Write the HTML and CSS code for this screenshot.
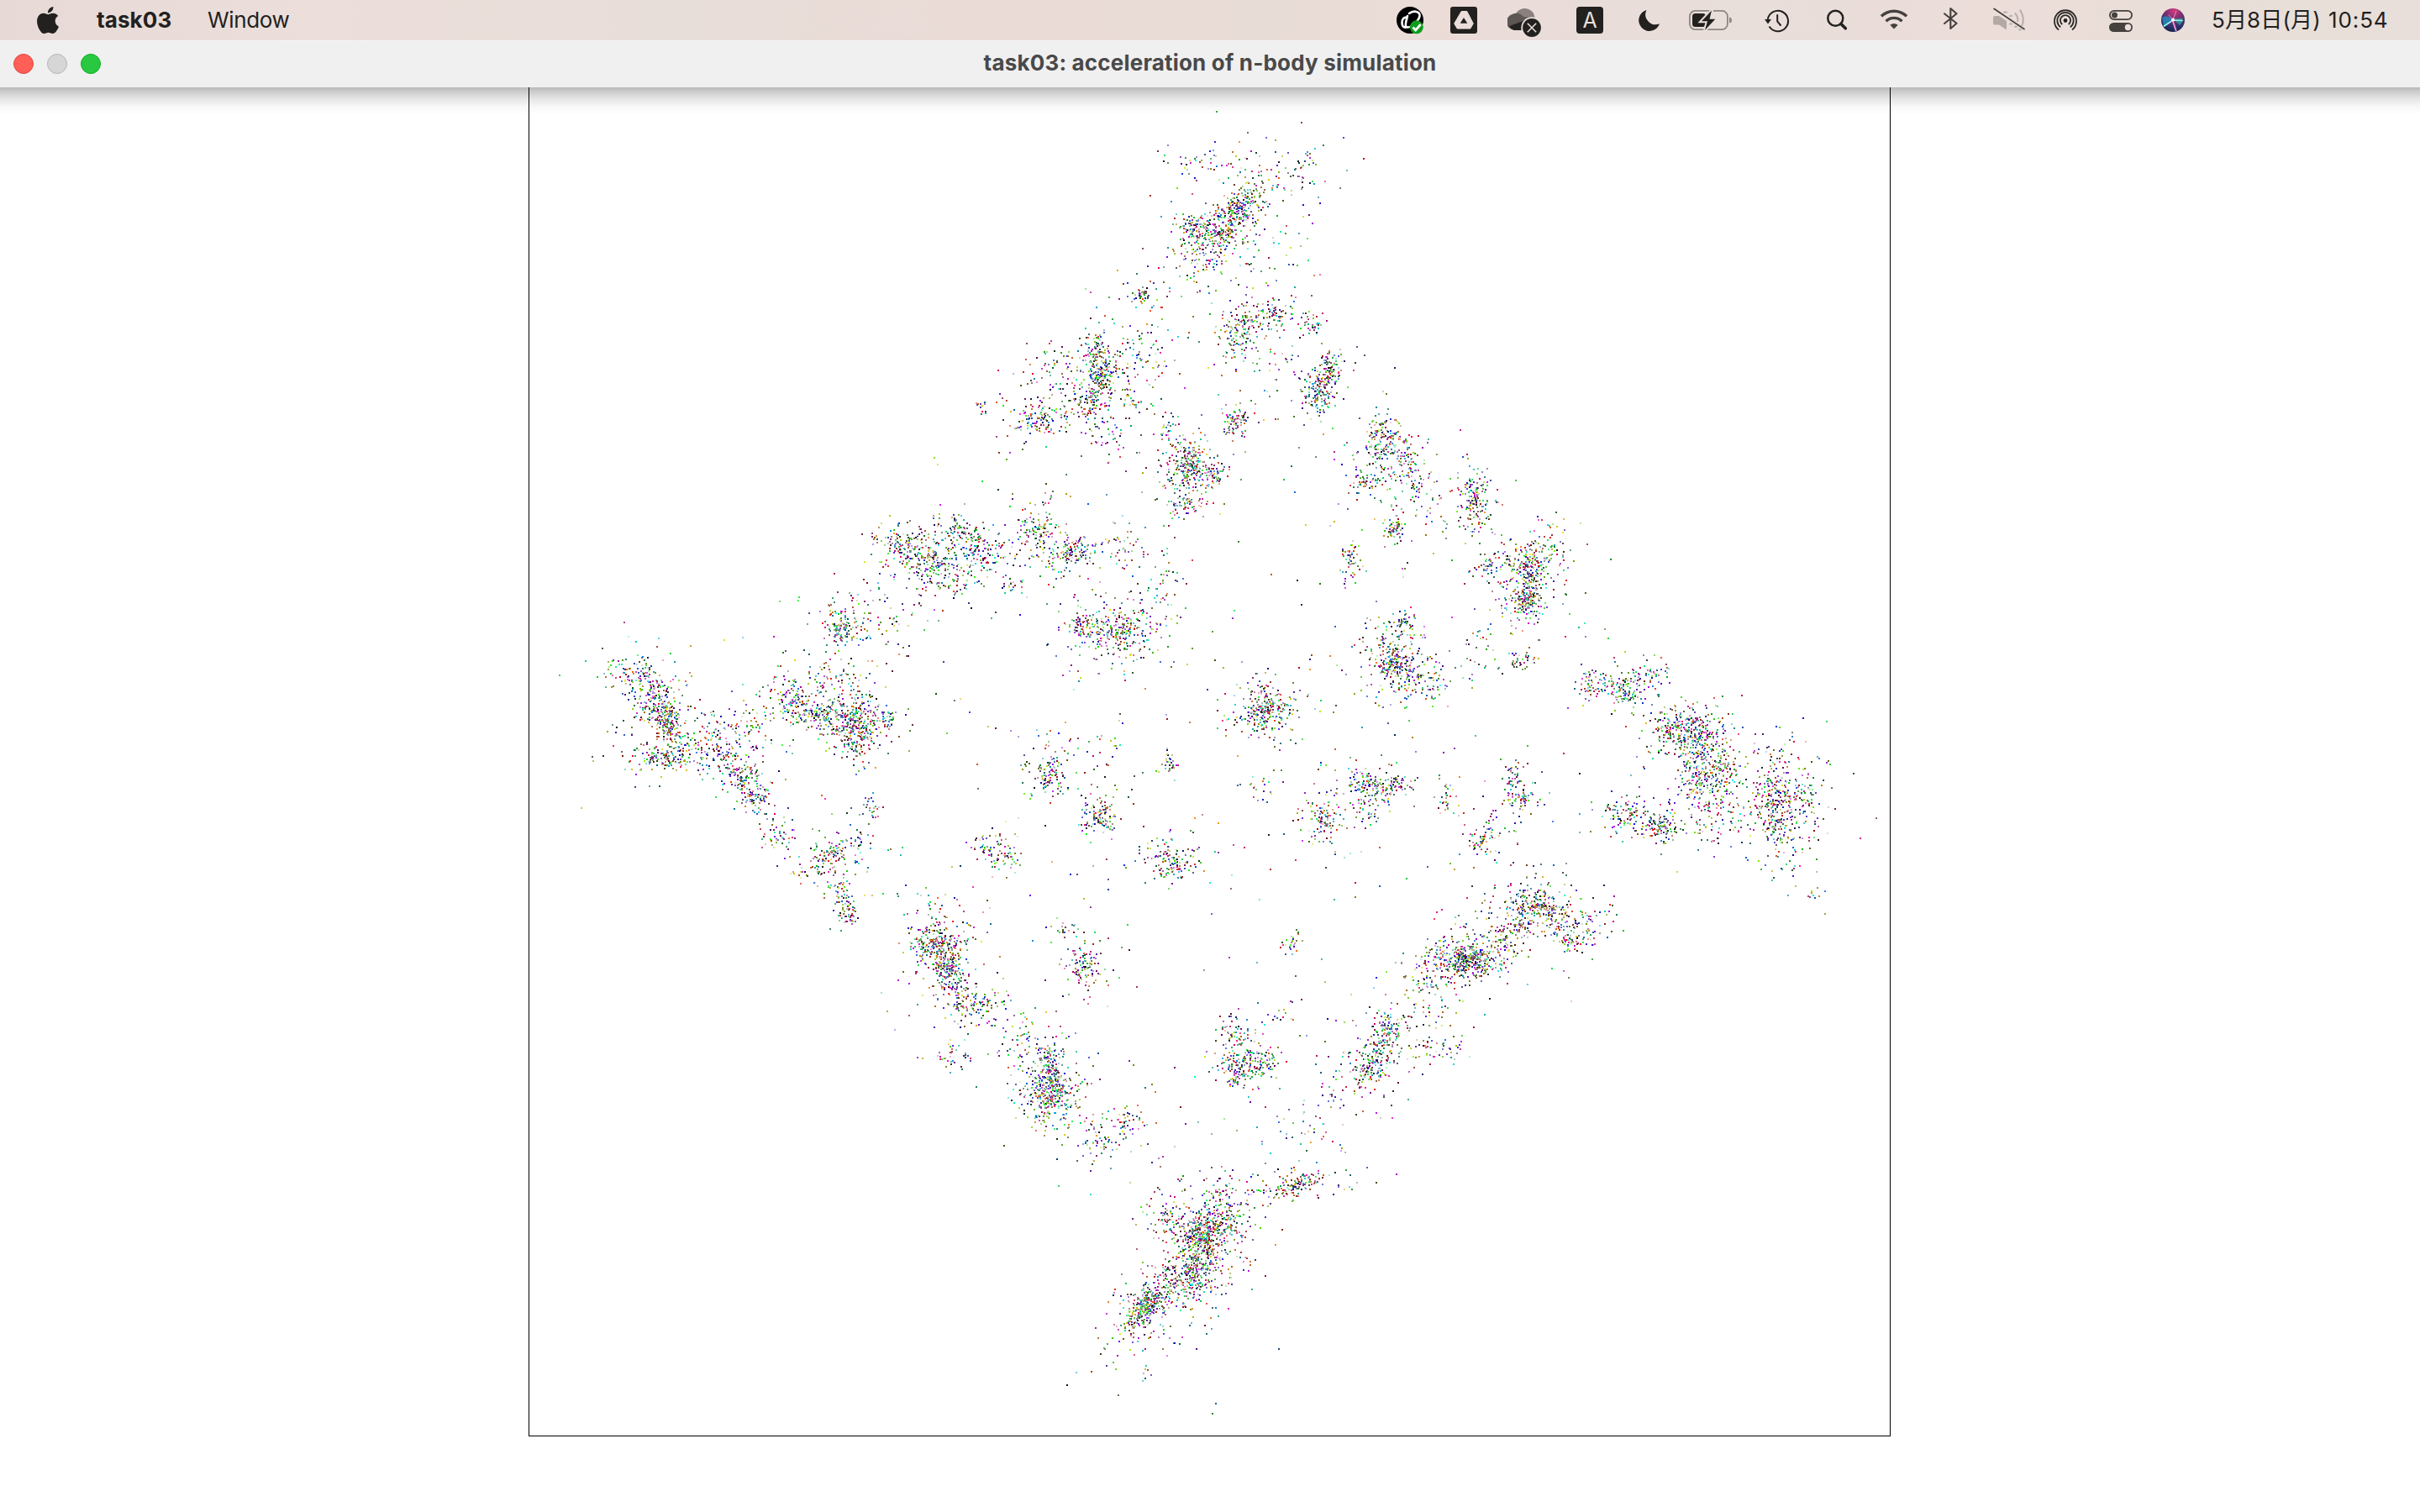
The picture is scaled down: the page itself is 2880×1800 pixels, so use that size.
FILE: index.html
```html
<!DOCTYPE html>
<html lang="ja">
<head>
<meta charset="utf-8">
<title>task03</title>
<link rel="stylesheet" href="styles.css">
</head>
<body>
<header class="menubar">
  <svg class="apple" width="26" height="32" viewBox="2.2 0 19.6 24" preserveAspectRatio="none"><path d="M12.152 6.896c-.948 0-2.415-1.078-3.96-1.04-2.04.027-3.91 1.183-4.961 3.014-2.117 3.675-.546 9.103 1.519 12.09 1.013 1.454 2.208 3.09 3.792 3.039 1.52-.065 2.09-.987 3.935-.987 1.831 0 2.35.987 3.96.948 1.637-.026 2.676-1.48 3.676-2.948 1.156-1.688 1.636-3.325 1.662-3.415-.039-.013-3.182-1.221-3.22-4.857-.026-3.04 2.48-4.494 2.597-4.559-1.429-2.09-3.623-2.324-4.39-2.376-2-.156-3.675 1.09-4.61 1.09zM15.53 3.83c.843-1.012 1.4-2.427 1.245-3.83-1.207.052-2.662.805-3.532 1.818-.78.896-1.454 2.338-1.273 3.714 1.338.104 2.715-.688 3.559-1.701"/></svg>
  <span class="app-name">task03</span>
  <span class="menu-item">Window</span>
  <div class="status">
    <svg width="64" height="48"><circle cx="16" cy="24" r="16" fill="#000"/><path d="M11.500 20.500C8 21 6.500 24 6.500 27C6.500 31 8 33 11.500 32.500M13 19C12 24 9.500 29 11.500 32C15 34 22 29 24.500 25M15 16C21 11.500 28 14 27.500 19C27 23 24 26 21 29" fill="none" stroke="#fff" stroke-width="2.600" stroke-linecap="round"/><circle cx="23.800" cy="32.300" r="8" fill="#0e9c1c"/><path d="M19.500 32.500l3.200 3.500l6-7" fill="none" stroke="#fff" stroke-width="2.800"/></svg>
    <svg width="68" height="48"><rect y="8" width="32" height="32" rx="3"/><path d="M13.200 13.500H19.800L27.300 28L23.800 34H8.200L4.700 28Z" fill="#ebdeda" stroke="#ebdeda" stroke-linejoin="round"/><path d="M16 21L20.300 27.700H11.700Z"/></svg>
    <svg width="82" height="48"><circle cx="20.500" cy="22" r="12" fill="#8a807d"/><path d="M8 36A9.800 9.800 0 0 1 5.500 17C10 14.500 16 15.500 19 20C24 20 30 22 33 26L22 36Z" fill="#5d5753"/><path d="M2 31L22 24L24 36H8Q4.500 35 2 31Z" fill="#252321"/><circle cx="29" cy="33" r="12.700" fill="#e9deda"/><circle cx="29" cy="33" r="10.900"/><path d="M23.800 27.800l10.400 10.400m0-10.400l-10.400 10.400" stroke="#e9deda" stroke-width="1.600"/></svg>
    <svg width="74" height="48"><rect y="8" width="32" height="32" rx="4"/><text x="16" y="33" class="input-letter">A</text></svg>
    <svg width="60" height="48"><path d="M9.500 12A12.700 12.700 0 1 0 25 28.200A12 12 0 0 1 9.500 12Z"/></svg>
    <svg width="90" height="48"><rect x=".9" y="12.900" width="45" height="22.200" rx="6.500" fill="none" stroke="#8e8683" stroke-width="1.800"/><path d="M48 20.500Q51 21 51 24T48 27.500Z" fill="#8e8683"/><rect x="4" y="16" width="16" height="16" rx="3.500"/><path d="M27 12.500L15 25.300H22L19 36L31.300 22.700H24.500Z" stroke="#e9deda" stroke-width="4"/><path d="M27 12.500L15 25.300H22L19 36L31.300 22.700H24.500Z"/></svg>
    <svg width="74" height="48"><path d="M3.800 23A12.200 12.200 0 1 1 5.500 31.500" fill="none" stroke="#222120" stroke-width="2"/><path d="M0 23H8L4 28.500Z"/><path d="M15.200 18V25.500L19 30" fill="none" stroke="#222120" stroke-width="2" stroke-linecap="round"/></svg>
    <svg width="63" height="48"><circle cx="10.300" cy="21.700" r="9" fill="none" stroke="#222120" stroke-width="2.500"/><path d="M17 28.500L22.300 33.800" stroke="#222120" stroke-width="3.600" stroke-linecap="round"/></svg>
    <svg width="76" height="48"><g fill="none" stroke="#45413f" stroke-width="3.400"><path d="M1.900 19.300A21.700 21.700 0 0 1 32.100 19.300"/><path d="M7.500 25.300A13.500 13.500 0 0 1 26.500 25.300"/></g><path d="M17 34.500L12.300 29.800Q17 26 21.700 29.800Z" fill="#45413f"/></svg>
    <svg width="58" height="48"><path d="M1 16.300L15.500 27.800L8.300 34V10L15.500 16.300L1 28" fill="none" stroke="#45413f" stroke-width="2.100" stroke-linejoin="round" stroke-linecap="round"/></svg>
    <svg width="72" height="48"><path d="M3 19H8L17 25V35H16L8 29.500H3Q1 29.500 1 27.500V21Q1 19 3 19Z" fill="#b3a9a5"/><g fill="none" stroke="#b9aeaa" stroke-width="2"><path d="M33 11.500Q39.500 23 35 31"/><path d="M27 15.500Q31.500 21 30 26"/><path d="M21 28.500h2M27 31.800h2M32 35.300h2M21 19h2M14 14.500h3" stroke-linecap="round"/></g><path d="M1.500 10L38.500 35" stroke="#45413f" stroke-width="1.600"/></svg>
    <svg width="67" height="48"><g fill="none" stroke="#2b2927" stroke-width="1.800"><path d="M7 35.500A13 13 0 1 1 23 35.500"/><path d="M9.200 32.300A9.700 9.700 0 1 1 20.800 32.300"/><path d="M11.300 29A6.100 6.100 0 1 1 18.700 29"/></g><circle cx="15" cy="24.500" r="2.400"/></svg>
    <svg width="62" height="48"><rect x=".9" y="12.900" width="26.200" height="10.200" rx="5.100" fill="none" stroke="#45413f" stroke-width="1.800"/><circle cx="6.500" cy="18" r="3.500" fill="#45413f"/><rect y="27" width="28" height="11" rx="5.500" fill="#45413f"/><circle cx="22.500" cy="32.500" r="3.700" fill="#ebdeda"/></svg>
    <svg width="60" height="48"><defs><radialGradient id="orb" cx=".55" cy=".1" r=".95"><stop offset="0" stop-color="#d23a7c"/><stop offset=".42" stop-color="#70306f"/><stop offset=".75" stop-color="#27326c"/><stop offset="1" stop-color="#151f42"/></radialGradient></defs><circle cx="14" cy="24" r="14" fill="url(#orb)"/><path d="M1 21Q8 17 14 24Q9 29 3 31Z" fill="#2196c4" opacity=".75"/><path d="M14 23L25.500 21.500Q26.500 26 22 30Z" fill="#29a79b" opacity=".75"/><g fill="none" stroke-linecap="round"><path d="M3.500 31L14 24L25 24.500" stroke="#9df2f0" stroke-width="1.700"/><path d="M13.500 24L17.500 36" stroke="#f58fd5" stroke-width="2"/><path d="M9 18L14 23.500L18 13" stroke="#e18bc8"/></g><circle cx="14" cy="23.500" r="2" fill="#fff"/></svg>
    <span class="date">5月8日(月)</span>
    <span class="clock">10:54</span>
  </div>
</header>
<div class="titlebar">
  <div class="lights"><i class="light close"></i><i class="light minimise"></i><i class="light zoom"></i></div>
  <h1 class="title">task03: acceleration of n-body simulation</h1>
</div>
<main class="content">
  <canvas class="bodies" id="bodies" width="1619" height="1605"></canvas>
</main>
<script src="bodies.js"></script>
</body>
</html>
```

FILE: styles.css
```css
* { box-sizing: border-box; }

body {
  margin: 0;
  width: 2880px;
  height: 1800px;
  display: flex;
  flex-direction: column;
  overflow: hidden;
  background: #fff;
  font-family: Inter, "Noto Sans CJK JP", sans-serif;
}

.menubar {
  height: 48px;
  flex: none;
  display: flex;
  align-items: center;
  padding-left: 44px;
  background: linear-gradient(90deg, #e7dad6, #ecdeda 13%, #e8ded9 28%, #ebdbd7 42%, #e8dcd6 52%, #ebdcd8 60%, #e8deda 72%, #ecddd9 82%, #e8dfd9 95%, #e8dfda);
  color: #222120;
  font-size: 26px;
  line-height: 48px;
  white-space: nowrap;
}

.menubar svg { display: block; flex: none; fill: #222120; }
.app-name { width: 132px; margin-left: 45px; font-weight: 700; letter-spacing: 0.1px; }
.menu-item { letter-spacing: -0.35px; }
.status { margin-left: auto; width: 1218px; display: flex; }
.input-letter { fill: #ebdeda; font-size: 25px; text-anchor: middle; }
.date { width: 139px; letter-spacing: 0.15px; }
.clock { letter-spacing: 0.9px; }

.titlebar {
  height: 56px;
  flex: none;
  display: grid;
  grid-template-columns: 1fr auto 1fr;
  align-items: start;
  padding: 0 16px;
  border-top: 1px solid #f8f6f5;
  background: #f0f0f0;
}

.lights { display: flex; gap: 16px; padding-top: 15px; }
.light { width: 24px; height: 24px; border-radius: 50%; border: 1px solid; }
.close { background: #ff5f57; border-color: #e2463f; }
.minimise { background: #d6d6d6; border-color: #b5b5b5; }
.zoom { background: #28c840; border-color: #12ac28; }

.title {
  margin: 0;
  color: #494949;
  font-size: 26px;
  font-weight: 700;
  line-height: 52px;
  letter-spacing: 0.18px;
  white-space: nowrap;
}

.content {
  flex: 1;
  padding-left: 629px;
  background: linear-gradient(#b9b9b9, #cfcfcf 6px, #e6e6e6 14px, #f8f8f8 23px, #fff 32px);
}

.bodies { display: block; border: 1px solid #000; border-top: 0; box-sizing: content-box; }
```

FILE: bodies.js
```js
// Clusters of bodies: x, y, spread along the axis, spread across it, axis angle, count.
const UNIT = 2880 / 1568;
const clusters = [
  [801,136,9,5,-35,190],[776,151,8,7,0,140],[792,152,4,3,0,60],[805,140,26,18,-30,120],[780,103,15,6,0,40],[845,107,5,7,0,20],[825,112,15,12,0,55],[776,168,7,7,0,40],[800,170,22,13,0,45],
  [740,190,3,2.5,0,30],[740,190,8,7,0,15],[803,215,5,8,20,100],[822,204,6,5,0,55],[850,210,5,4,0,30],[854,253,4,6,0,100],[861,238,3.5,6,0,75],[855,247,9,13,0,55],[815,215,19,18,0,85],
  [708,230,4,8,0,65],[714,243,5,7,0,120],[707,260,6,6,0,85],[710,245,19,19,0,110],[682,248,15,12,0,70],[673,271,9,6,0,100],[716,282,5,6,0,30],[740,232,8,11,0,35],[733,260,4,4,0,18],[745,210,18,18,0,28],[635,264,3,3,0,8],
  [768,300,8,9,0,150],[771,303,4,5,0,70],[784,308,5,4,0,60],[766,327,6,4,0,50],[768,303,14,14,0,50],[755,278,3,3,0,14],[799,272,4,5,0,65],[799,272,9,10,0,18],
  [587,353,12,8,20,125],[603,362,10,6,20,110],[612,375,13,7,0,65],[622,343,9,3.5,20,65],[637,357,8,6,0,85],[672,343,7,6,0,85],[694,357,7,5,0,120],[665,358,22,11,0,50],[603,358,22,14,0,60],[655,378,4,3,0,14],[727,353,4,6,0,22],[735,360,15,12,0,28],[756,375,4,8,0,20],[745,385,12,10,0,18],[670,325,18,7,0,18],
  [724,408,12,7,0,160],[702,404,7,4,0,60],[722,410,20,16,0,120],
  [545,407,5,5,0,85],[545,403,9,9,0,35],[560,390,9,11,0,30],[575,402,12,7,0,35],
  [410,438,12,8,20,75],[420,442,5,8,-20,80],[433,468,4,8,0,130],[424,459,7,6,0,55],[425,465,17,18,0,90],[433,491,12,5,0,120],[448,485,9,6,0,50],
  [475,470,13,7,0,75],[515,456,7,6,0,100],[510,450,13,11,0,50],[532,463,9,4,0,80],[553,467,7,7,0,190],[556,482,5,6,0,60],[550,465,16,13,0,120],[545,437,13,8,0,50],[572,466,5,4,0,35],
  [481,503,8,5,50,100],[467,488,5,5,0,45],[492,517,5,5,0,50],[503,540,5,6,0,40],[475,498,17,13,50,45],[565,522,3,4,0,20],[557,545,5,6,0,25],[538,552,6,4,0,55],[529,562,9,5,0,45],[545,582,8,4,70,60],[549,594,4,3,0,25],[545,550,17,13,0,35],
  [603,612,6,5,0,100],[614,627,5,9,-20,190],[611,618,12,14,0,140],[626,652,6,3,0,30],[635,648,8,6,0,45],[628,660,17,13,0,45],[619,684,8,4,0,28],[605,592,12,8,0,30],
  [680,502,4,6,0,65],[680,498,9,10,0,50],[712,530,5,5,0,80],[712,526,10,10,0,22],[758,495,3,5,0,28],[640,548,7,5,0,45],[651,556,6,4,0,30],[759,560,6,5,0,70],[758,555,13,8,0,60],[703,625,4,6,0,60],[702,627,9,12,0,45],[690,602,7,4,0,15],[718,490,11,9,0,22],
  [680,695,4,9,0,160],[677,709,9,6,0,130],[679,702,13,16,0,140],[660,675,7,8,0,40],[683,722,9,7,0,50],[710,743,6,6,0,40],[730,728,5,5,0,38],[725,732,16,10,0,25],
  [819,459,4,7,0,95],[821,460,12,9,0,130],[817,458,22,12,0,38],
  [894,280,5,6,0,80],[893,294,4,5,0,35],[912,300,11,4,65,90],[884,312,5,3,0,35],[903,343,3,5,0,60],[875,360,3,6,0,32],[900,302,17,16,0,85],[875,365,5,10,0,15],[925,320,9,13,0,28],
  [955,322,4,10,0,110],[956,325,9,13,0,45],[985,362,10,6,0,95],[990,388,5,5,0,120],[989,372,4,8,0,70],[1005,353,7,9,0,45],[963,367,5,4,0,32],[991,380,15,16,0,120],[987,427,4,3.5,0,32],[962,415,10,13,0,30],
  [900,425,6,8,0,80],[905,432,6,4,30,95],[905,425,15,16,0,120],[921,440,8,8,0,70],[910,403,4,3,0,28],
  [1051,446,5,5,0,70],[1030,442,5,6,0,35],[1072,434,5,4,0,25],[1048,443,13,8,0,75],[1095,473,9,7,0,170],[1083,471,7,6,0,55],[1094,479,18,14,0,120],[1101,496,6,11,0,160],[1118,498,5,6,0,45],[1108,512,11,10,0,80],[1075,535,5,5,0,85],[1050,526,6,5,0,40],[1064,530,14,7,0,80],[1108,530,14,9,0,65],
  [1150,517,7,8,0,140],[1151,537,5,4,0,50],[1169,513,5,7,0,40],[1152,522,15,17,0,130],[1175,579,2.5,2,0,8],[1160,490,15,9,0,25],[1155,555,10,11,0,25],
  [888,509,7,5,0,110],[904,508,6,3,0,40],[857,530,3.5,7,0,60],[857,533,11,11,0,45],[887,525,5,5,0,28],[884,510,17,10,0,45],[818,510,6,4,0,18],[935,516,4,6,0,28],[980,506,3,6,0,40],[985,517,5,4,0,45],[959,545,5,4,0,40],[965,535,9,8,0,20],[982,535,10,14,0,18],
  [950,622,8,5,0,240],[950,619,15,10,0,160],[925,632,10,7,0,50],[977,605,11,4,-50,95],[990,584,12,6,0,110],[996,587,5,3,0,50],[1013,596,10,7,0,90],[1020,608,7,4,0,50],[1038,597,6,6,0,18],[990,595,23,17,0,80],
  [836,612,3.5,4,0,24],[798,668,4,6,0,45],[801,692,5,6,0,100],[817,688,5,5,0,60],[806,685,12,12,0,55],[828,659,8,4,0,14],
  [893,680,10,4,-50,100],[888,693,6,4,0,55],[899,663,5,5,0,45],[930,680,8,4,0,45],[922,650,13,11,0,50],[892,684,15,14,0,65],[868,706,12,11,0,35],[845,735,15,8,0,32],
  [838,768,8,3,-20,85],[840,768,19,7,0,45],
  [781,798,10,7,-50,190],[777,802,6,6,0,120],[773,823,9,6,-60,150],[755,789,8,4,0,50],[794,790,6,7,0,80],[777,803,17,17,0,190],[740,848,7,4,-50,160],[750,838,10,6,-40,110],[745,850,15,12,0,75],[770,831,12,9,0,110],[791,772,8,7,0,35],[725,868,15,11,0,24],[743,883,3,8,0,8]
];
const strays = [[785,916],[787,909],[870,89],[1215,530],[605,296],[362,437],[843,79],[788,72],[691,897],[724,904],[697,889],[891,766],[903,238],[703,187],[404,403],[447,418],[1205,543],[765,764],[764,765],[763,764],[1182,592],[1168,465],[1183,467]];

let seed = 20230508;
function random() {
  seed = (seed + 0x6d2b79f5) | 0;
  let t = Math.imul(seed ^ (seed >>> 15), 1 | seed);
  t = (t + Math.imul(t ^ (t >>> 7), 61 | t)) ^ t;
  return ((t ^ (t >>> 14)) >>> 0) / 4294967296;
}
function gauss() {
  return Math.sqrt(-2 * Math.log(1 - random())) * Math.cos(2 * Math.PI * random());
}

const ctx = document.getElementById("bodies").getContext("2d");
const channel = () => Math.floor(random() * 245);
function body(x, y) {
  ctx.fillStyle = `rgb(${channel()},${channel()},${channel()})`;
  ctx.fillRect(Math.round(x * UNIT - 630), Math.round(y * UNIT - 104), 2, 2);
}

// One body in eight is flung further out, so that clusters thin out gradually.
for (const [cx, cy, along, across, angle, count] of clusters) {
  const c = Math.cos(angle * Math.PI / 180);
  const s = Math.sin(angle * Math.PI / 180);
  for (let i = 0; i < count * 1.1; i++) {
    const reach = random() < 0.125 ? 1.6 : 1;
    const u = gauss() * along * reach;
    const v = gauss() * across * reach;
    body(cx + u * c - v * s, cy + u * s + v * c);
  }
}

// Thin background inside the diamond spanned by the outermost bodies.
for (let i = 0; i < 360; i++) {
  const a = random() * 2 - 1;
  const b = random() * 2 - 1;
  body(785 + (a + b) * 175, 490 + (a - b) * 180 + (a + b) * 18);
}
for (const [x, y] of strays) body(x, y);
```
